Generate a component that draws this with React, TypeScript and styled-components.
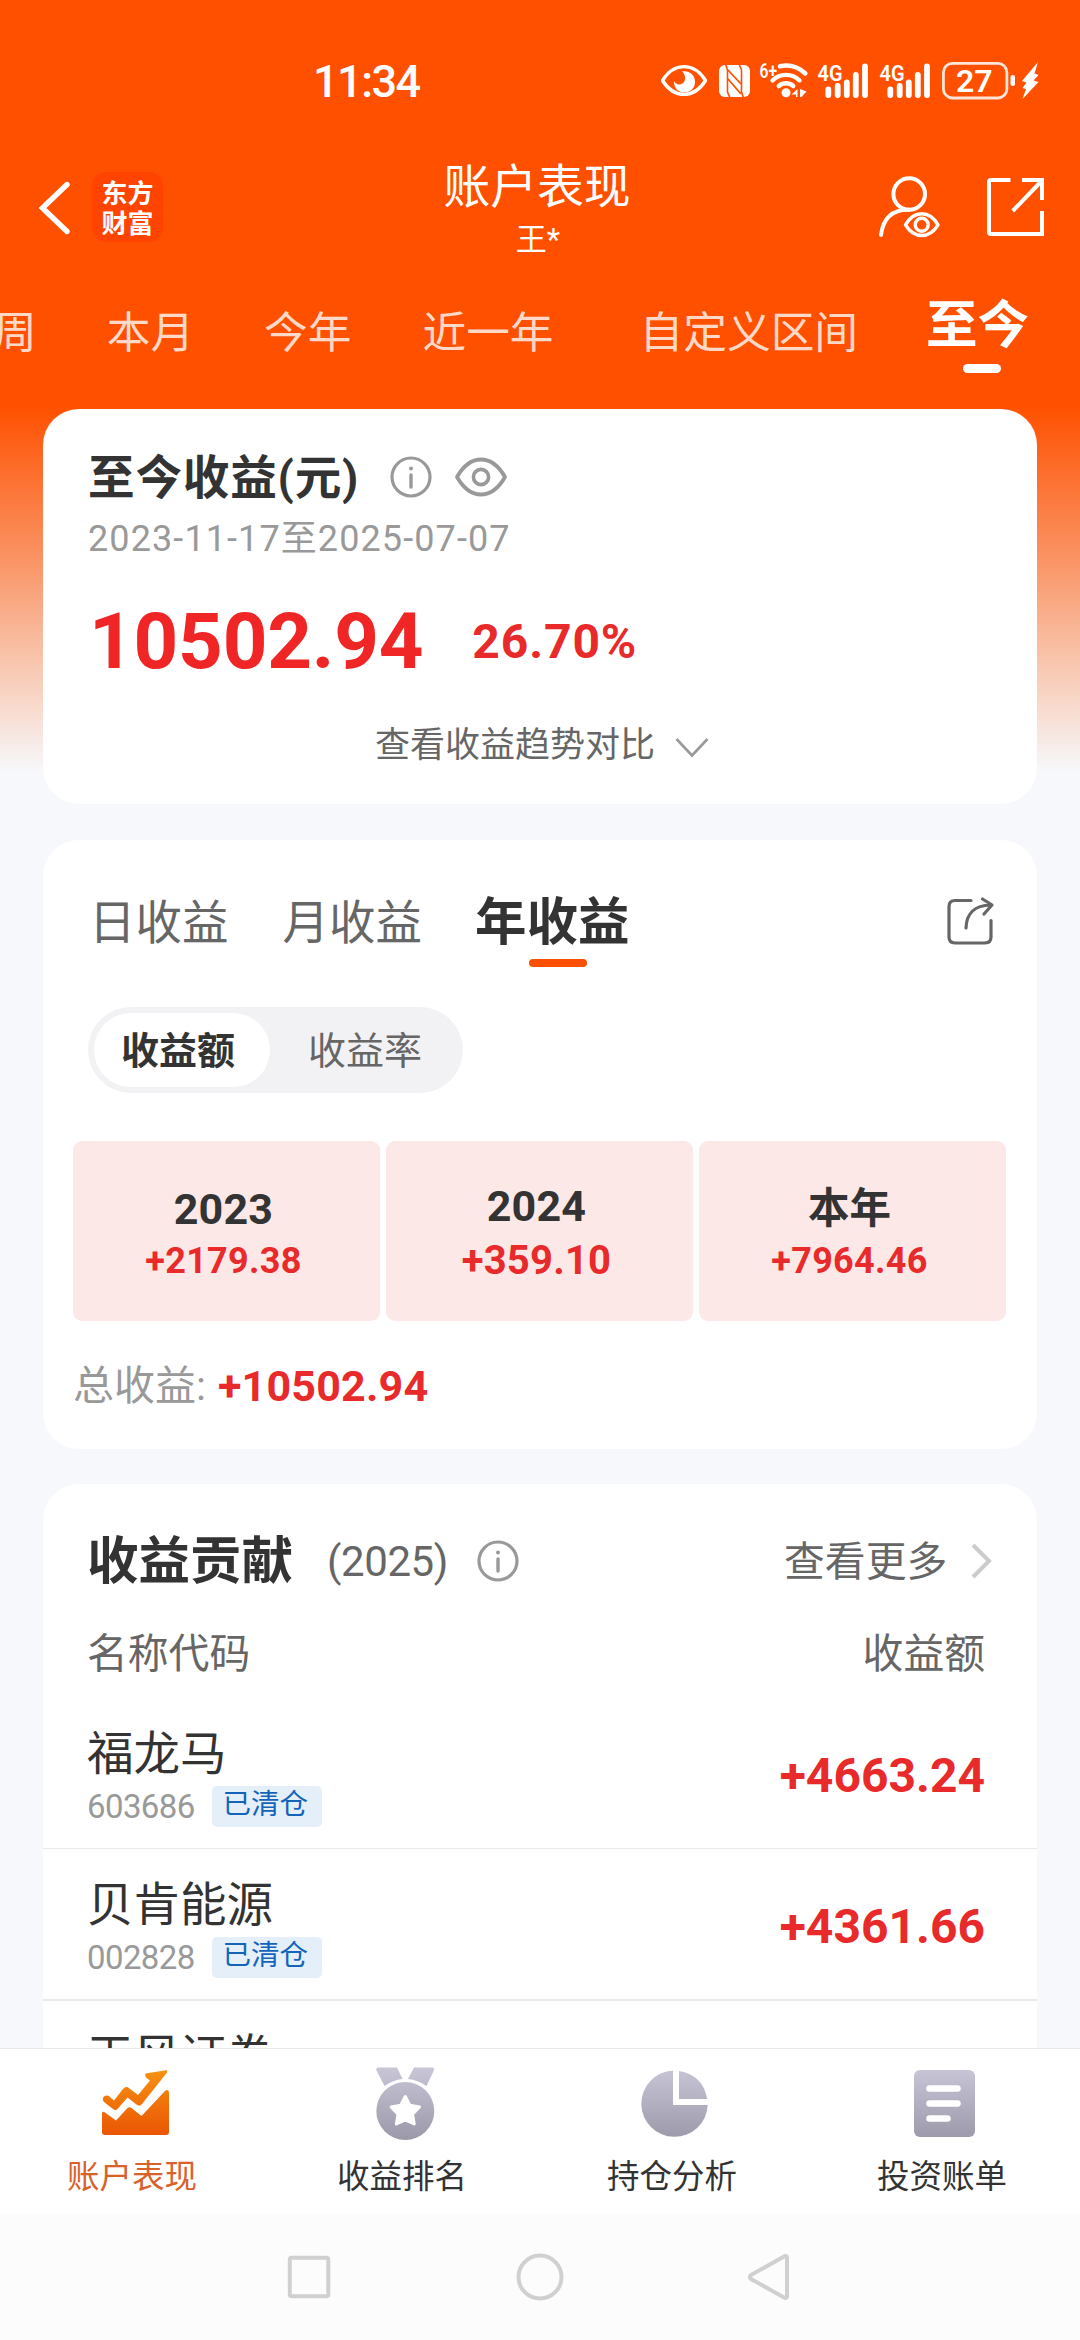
import React from 'react';
import styled, { createGlobalStyle } from 'styled-components';

const GlobalStyle = createGlobalStyle`
  * { box-sizing: border-box; }
  body { margin: 0; background: #f7f8fb; }
`;

const Page = styled.div`
  width: 1080px;
  height: 2340px;
  overflow: hidden;
  display: flex;
  flex-direction: column;
  font-family: Roboto, 'Noto Sans CJK SC', sans-serif;
  white-space: nowrap;
  background: linear-gradient(#ff5000 0, #ff5000 405px, #fa9465 560px, #f8c0a5 650px, #f7f8fb 772px);
`;

interface TxtProps { $s: number; $lh?: number; $w?: number; $c?: string; $ls?: number; $ml?: number; $mt?: number }
const Txt = styled.span<TxtProps>`
  display: block;
  flex: none;
  font-size: ${p => p.$s}px;
  line-height: ${p => p.$lh ?? 60}px;
  font-weight: ${p => p.$w ?? 400};
  color: ${p => p.$c ?? '#333'};
  letter-spacing: ${p => p.$ls ?? 0}px;
  margin-left: ${p => p.$ml ?? 0}px;
  margin-top: ${p => p.$mt ?? 0}px;
`;

const StatusBar = styled.div`
  height: 160px;
  padding: 61px 41px 0 315px;
  display: flex;
  align-items: flex-start;
  justify-content: space-between;
`;
const StatusIcons = styled.div`
  display: flex;
`;
const Svg = styled.svg<{ $ml?: number; $mt?: number }>`
  display: block;
  flex: none;
  overflow: visible;
  margin-left: ${p => p.$ml ?? 0}px;
  margin-top: ${p => p.$mt ?? 0}px;
`;

interface GlyphProps { x: number; y: number; w: number; h: number; ml?: number; mt?: number; children: React.ReactNode }
const Glyph = ({ x, y, w, h, ml, mt, children }: GlyphProps) => (
  <Svg width={w} height={h} viewBox={`${x} ${y} ${w} ${h}`} $ml={ml} $mt={mt} fill="none">{children}</Svg>
);

const Header = styled.header`
  height: 104px;
  display: grid;
  grid-template-columns: 1fr auto 1fr;
`;
const HeaderSide = styled.div<{ $end?: boolean }>`
  display: flex;
  align-items: flex-start;
  justify-content: ${p => (p.$end ? 'flex-end' : 'flex-start')};
  padding: 12px ${p => (p.$end ? 34 : 0)}px 0 ${p => (p.$end ? 0 : 38)}px;
`;
const HeaderTitle = styled.div`
  display: flex;
  flex-direction: column;
  align-items: center;
`;
const Logo = styled.div`
  width: 71px;
  height: 70px;
  margin-left: 20px;
  border-radius: 14px;
  background: #ff4400;
  color: #fff;
  font: 700 26px/30px 'Noto Sans CJK SC', sans-serif;
  text-align: center;
  padding-top: 5px;
`;

const PeriodTabs = styled.nav`
  height: 145px;
  flex: none;
  display: flex;
  align-items: flex-start;
  padding-top: 39px;
`;
const ActivePeriod = styled.div`
  margin-left: 68px;
  margin-top: -7px;
  display: flex;
  flex-direction: column;
  align-items: center;
`;
const Indicator = styled.i<{ $w: number; $h: number; $c: string; $mt: number; $ml: number }>`
  width: ${p => p.$w}px;
  height: ${p => p.$h}px;
  background: ${p => p.$c};
  border-radius: 5px;
  margin-top: ${p => p.$mt}px;
  margin-left: ${p => p.$ml}px;
`;

const Card = styled.section<{ $h: number; $open?: boolean }>`
  flex: none;
  height: ${p => p.$h}px;
  margin: ${p => (p.$open ? -1 : 0)}px 43px ${p => (p.$open ? 0 : 36)}px;
  border-radius: ${p => (p.$open ? '36px 36px 0 0' : '36px')};
  background: #fff;
  overflow: hidden;
  display: flex;
  flex-direction: column;
`;
const Row = styled.div<{ $pad?: string; $h?: number; $justify?: string; $align?: string }>`
  display: flex;
  flex: none;
  align-items: ${p => p.$align ?? 'center'};
  justify-content: ${p => p.$justify ?? 'flex-start'};
  padding: ${p => p.$pad ?? '0'};
  height: ${p => (p.$h ? `${p.$h}px` : 'auto')};
`;

const ActiveTab = styled.div`
  margin-left: 53px;
  display: flex;
  flex-direction: column;
  align-items: center;
`;
const ShareSlot = styled.div`
  margin-left: auto;
`;
const Segmented = styled.div`
  width: 375px;
  height: 86px;
  flex: none;
  margin: 40px 0 48px 45px;
  padding: 6px;
  border-radius: 43px;
  background: #f2f2f5;
  display: flex;
`;
const Segment = styled.div<{ $on?: boolean }>`
  width: ${p => (p.$on ? 176 : 187)}px;
  height: 74px;
  border-radius: 37px;
  background: ${p => (p.$on ? '#fff' : 'transparent')};
  display: flex;
  align-items: center;
  padding-left: ${p => (p.$on ? 27 : 38)}px;
`;
const Tiles = styled.div`
  display: grid;
  grid-template-columns: repeat(3, 1fr);
  gap: 6px;
  padding: 0 31px 0 30px;
`;
const Tile = styled.div`
  height: 180px;
  border-radius: 9px;
  background: #fce8e7;
  display: flex;
  flex-direction: column;
  align-items: center;
  padding-right: 6px;
`;

const Holding = styled.div<{ $line: number }>`
  flex: none;
  height: ${p => 150 + p.$line}px;
  padding: 24px 52px 0 44px;
  display: flex;
  justify-content: space-between;
  border-bottom: ${p => p.$line}px solid #ebebec;
`;
const CodeLine = styled.div`
  display: flex;
  align-items: center;
  height: 41px;
`;
const Tag = styled.span`
  height: 41px;
  width: 110px;
  margin-left: 17px;
  padding-right: 3px;
  border-radius: 5px;
  background: #e4eff9;
  color: #1464b9;
  font-size: 28.5px;
  line-height: 37px;
  text-align: center;
`;

const BottomTabs = styled.nav`
  flex: none;
  height: 166px;
  border-top: 1px solid #e9e9ea;
  background: #fff;
  display: grid;
  grid-template-columns: repeat(4, 1fr);
`;
const BottomTab = styled.div`
  display: flex;
  flex-direction: column;
  align-items: center;
  padding-top: 13px;
`;
const SystemNav = styled.div`
  flex: none;
  height: 126px;
  background: #fcfcfc;
  display: flex;
  justify-content: center;
  padding-top: 37px;
`;

const RED = '#e82a2a';

const InfoIcon = ({ ml, mt }: { ml: number; mt?: number }) => (
  <Glyph x={0} y={0} w={42} h={42} ml={ml} mt={mt}>
    <circle cx="21" cy="21" r="19" stroke="#999" strokeWidth="3.2" />
    <circle cx="21" cy="12.6" r="2" fill="#999" />
    <path d="M21 19V31" stroke="#999" strokeWidth="3.4" strokeLinecap="round" />
  </Glyph>
);

const Signal = ({ ml }: { ml: number }) => (
  <Glyph x={818} y={61} w={50} h={40} ml={ml}>
    <text x="817.5" y="81" fontSize="22.5" fontWeight="600" fill="#fff" textLength="25" lengthAdjust="spacingAndGlyphs">4G</text>
    <path d="M828.3 89.5V95M837.7 86V95M846.8 82.5V95M855.8 75V95M865 66.5V95" stroke="#fff" strokeWidth="5.8" strokeLinecap="round" />
  </Glyph>
);

const Chevron = () => (
  <Glyph x={0} y={0} w={34} h={22} ml={20} mt={4}>
    <path d="M1.5 2L17 18.500L32.500 2" stroke="#999" strokeWidth="2.6" />
  </Glyph>
);

const years = [
  { label: '2023', value: '+2179.38', ls: 43, vs: 36, y: 38, gap: 51, sp: 0.2, vsp: 0.3 },
  { label: '2024', value: '+359.10', ls: 43, vs: 40, y: 35, gap: 55, sp: 0.2, vsp: 0.2 },
  { label: '本年', value: '+7964.46', ls: 41.5, vs: 36, y: 38, gap: 51, sp: 0, vsp: 0.3 },
];

const holdings = [
  { name: '福龙马', code: '603686', gain: '+4663.24', line: 1 },
  { name: '贝肯能源', code: '002828', gain: '+4361.66', line: 2 },
  { name: '天风证券', code: '', gain: '', line: 0 },
];

export default function App() {
  return (
    <Page>
      <GlobalStyle />
      <svg width="0" height="0" style={{ position: 'absolute' }}>
        <defs>
          <linearGradient id="hot" x1="0" y1="2070" x2="0" y2="2135" gradientUnits="userSpaceOnUse">
            <stop stopColor="#f79210" /><stop offset="1" stopColor="#ea5504" />
          </linearGradient>
          <linearGradient id="cool" x1="0" y1="2067" x2="0" y2="2140" gradientUnits="userSpaceOnUse">
            <stop stopColor="#c9c7d7" /><stop offset="1" stopColor="#9b99a9" />
          </linearGradient>
        </defs>
      </svg>

      <StatusBar>
        <Txt $s={45} $lh={40} $w={500} $c="#fff" $ls={-1.5} $ml={-2} $mt={1}>11:34</Txt>
        <StatusIcons>
          <Glyph x={661} y={61} w={46} h={40}>
            <path d="M662.500 80.500C674 62 694 62 705.500 80.500C694 99 674 99 662.500 80.500Z" stroke="#fff" strokeWidth="3.4" strokeLinejoin="round" />
            <path d="M682 71.500C690 70 695.500 76 695 82.500C694.500 89.500 689 92.500 684 92.500C678 92.500 673.500 87.500 674 81C676 85.500 682.500 85.500 684.500 81C686 77.500 684.500 73.500 682 71.500Z" fill="#fff" />
          </Glyph>
          <Glyph x={719} y={61} w={31} h={40} ml={12}>
            <rect x="719" y="65" width="31" height="32" rx="6" fill="#fff" />
            <path d="M725.500 64L727.500 70V92L730 98M743.500 98L741.500 92V70L739 64" stroke="#ff5000" strokeWidth="1.6" />
            <path d="M728 70L741 84M728 79L741 94" stroke="#ff5000" strokeWidth="1.800" />
          </Glyph>
          <Glyph x={760} y={61} w={48} h={40} ml={10}>
            <text x="759.5" y="78" fontSize="20" fontWeight="600" fill="#fff" textLength="17.5" lengthAdjust="spacingAndGlyphs">6+</text>
            <path d="M780 66.200A27.500 27.500 0 0 1 805.300 73.500" stroke="#fff" strokeWidth="4.600" strokeLinecap="round" />
            <path d="M772.500 80.500A19 19 0 0 1 799.500 80.500M778.800 86A11 11 0 0 1 793.200 86" stroke="#fff" strokeWidth="4.400" strokeLinecap="round" />
            <circle cx="786" cy="92.800" r="4.500" fill="#fff" />
            <path d="M791.500 94.500L797.500 89V97H796V94.500ZM800 89L806.500 91.500L801.500 97H800Z" fill="#fff" />
          </Glyph>
          <Signal ml={10} />
          <Signal ml={12} />
          <Glyph x={942} y={61} w={74} h={40} ml={12}>
            <rect x="943.400" y="63.400" width="63.500" height="34.600" rx="9" stroke="#fff" strokeOpacity="0.85" strokeWidth="2.800" />
            <rect x="1010.500" y="75" width="4.500" height="11" rx="2" fill="#fff" />
            <text x="974.3" y="92" textAnchor="middle" fontSize="32" fontWeight="600" fill="#fff">27</text>
          </Glyph>
          <Glyph x={1021} y={61} w={18} h={40} ml={5}>
            <path d="M1038 62L1022 81L1026.500 82.500L1022.500 88L1026 89L1022.500 99L1038.500 82L1033.500 80.500L1038.500 75L1034.500 73.500Z" fill="#fff" />
          </Glyph>
        </StatusIcons>
      </StatusBar>

      <Header>
        <HeaderSide>
          <Glyph x={38} y={180} w={34} h={56} mt={8}>
            <path d="M67 184.500L42.500 208L67 231.500" stroke="#fff" strokeWidth="5.4" strokeLinecap="round" />
          </Glyph>
          <Logo>东方<br />财富</Logo>
        </HeaderSide>
        <HeaderTitle>
          <Txt $s={46.8} $lh={54} $c="#fff" $ml={-6}>账户表现</Txt>
          <Txt $s={31} $lh={51} $c="#fff" $ml={-4}>王*</Txt>
        </HeaderTitle>
        <HeaderSide $end>
          <Glyph x={878} y={172} w={64} h={68}>
            <circle cx="909.200" cy="194" r="15.800" stroke="#fff" strokeWidth="4" />
            <path d="M881 235C883 219 892 209.500 909 209.800" stroke="#fff" strokeWidth="4" strokeLinecap="round" />
            <path d="M905.500 224.800C914 210 929.500 210 938 224.800C929.500 239 914 239 905.500 224.800Z" stroke="#fff" strokeWidth="3.400" strokeLinejoin="round" />
            <circle cx="921.700" cy="224.800" r="6.500" stroke="#fff" strokeWidth="3.400" />
          </Glyph>
          <Glyph x={986} y={172} w={60} h={68} ml={44}>
            <path d="M1010.500 180H991Q989 180 989 182V232Q989 234 991 234H1042V211M1022 180H1042V200M1012.700 211L1042 180.500" stroke="#fff" strokeWidth="4" />
          </Glyph>
        </HeaderSide>
      </Header>

      <PeriodTabs>
        <Txt $s={43.7} $c="#ffd9c7" $ml={-7}>周</Txt>
        <Txt $s={43.7} $c="#ffd9c7" $ml={70}>本月</Txt>
        <Txt $s={43.7} $c="#ffd9c7" $ml={70}>今年</Txt>
        <Txt $s={43.7} $c="#ffd9c7" $ml={71}>近一年</Txt>
        <Txt $s={43.7} $c="#ffd9c7" $ml={86}>自定义区间</Txt>
        <ActivePeriod>
          <Txt $s={51.5} $w={700} $c="#fff">至今</Txt>
          <Indicator $w={38} $h={9} $c="#fff" $mt={8} $ml={9} />
        </ActivePeriod>
      </PeriodTabs>

      <Card $h={395}>
        <Row $pad="39px 0 0 45px">
          <Txt $s={46.6} $w={700} $ls={0.8}>至今收益(元)</Txt>
          <InfoIcon ml={31} mt={-3} />
          <Glyph x={455} y={455} w={52} h={42} ml={23} mt={-3}>
            <path d="M457 476Q467 458.500 481 458.500T505 476Q495 493.500 481 493.500T457 476Z" stroke="#999" strokeWidth="3.800" strokeLinejoin="round" />
            <circle cx="481" cy="476" r="7.600" stroke="#999" strokeWidth="3.600" />
          </Glyph>
        </Row>
        <Row $pad="1px 0 0 45px">
          <Txt $s={36} $c="#999" $ls={1.1}>2023-11-17至2025-07-07</Txt>
        </Row>
        <Row $pad="14px 0 0 46px" $h={132}>
          <Txt $s={78} $w={700} $c="#f02525" $lh={100} $ls={-0.2}>10502.94</Txt>
          <Txt $s={48} $w={700} $c={RED} $lh={100} $ml={49} $ls={0.9}>26.70%</Txt>
        </Row>
        <Row $pad="15px 0 0 4px" $justify="center">
          <Txt $s={35} $c="#666">查看收益趋势对比</Txt>
          <Chevron />
        </Row>
      </Card>

      <Card $h={609}>
        <Row $pad="53px 42px 0 46px" $align="flex-start" $h={127}>
          <Txt $s={46.5} $c="#666">日收益</Txt>
          <Txt $s={46.5} $c="#666" $ml={54}>月收益</Txt>
          <ActiveTab>
            <Txt $s={51.5} $w={700}>年收益</Txt>
            <Indicator $w={58} $h={8} $c="#fa5000" $mt={6} $ml={12} />
          </ActiveTab>
          <ShareSlot>
            <Glyph x={944} y={896} w={50} h={52} mt={3}>
              <path d="M970 900.500H954Q948 900.500 948 906.500V937Q948 943 954 943H984Q990 943 990 937V920.500" stroke="#666" strokeWidth="3.2" strokeLinecap="round" />
              <path d="M965 928C965.500 913 973 905.500 990 905M981.500 899L991 905L983 914" stroke="#666" strokeWidth="3.2" strokeLinecap="round" strokeLinejoin="round" />
            </Glyph>
          </ShareSlot>
        </Row>
        <Segmented>
          <Segment $on><Txt $s={38} $w={700} $mt={1}>收益额</Txt></Segment>
          <Segment><Txt $s={38} $c="#666" $mt={1}>收益率</Txt></Segment>
        </Segmented>
        <Tiles>
          {years.map(t => (
            <Tile key={t.label}>
              <Txt $s={t.ls} $w={700} $ls={t.sp} $mt={t.y}>{t.label}</Txt>
              <Txt $s={t.vs} $w={700} $c={RED} $lh={t.gap} $ls={t.vsp} $mt={-3}>{t.value}</Txt>
            </Tile>
          ))}
        </Tiles>
        <Row $pad="35px 0 0 30px">
          <Txt $s={41} $c="#999">总收益:</Txt>
          <Txt $s={43} $w={700} $c={RED} $ml={12} $ls={0.2}>+10502.94</Txt>
        </Row>
      </Card>

      <Card $h={564} $open>
        <Row $pad="48px 42px 0 44px">
          <Txt $s={51.5} $w={700}>收益贡献</Txt>
          <Txt $s={42} $c="#666" $ml={34} $ls={-0.4}>(2025)</Txt>
          <InfoIcon ml={29} mt={-2} />
          <Txt $s={40.8} $c="#666" $ml={265}>查看更多</Txt>
          <Glyph x={973} y={1542} w={24} h={36} ml={23} mt={-2}>
            <path d="M976 1544L992 1560L976 1576" stroke="#ccc" strokeWidth="4" />
          </Glyph>
        </Row>
        <Row $pad="32px 52px 0 44px" $justify="space-between">
          <Txt $s={40.8} $c="#666">名称代码</Txt>
          <Txt $s={40.8} $c="#666">收益额</Txt>
        </Row>
        <Row $h={14} />
        {holdings.map(h => (
          <Holding key={h.name} $line={h.line}>
            <div>
              <Txt $s={46.5} $lh={64}>{h.name}</Txt>
              {h.code && (
                <CodeLine>
                  <Txt $s={33} $lh={41} $c="#999" $ls={-0.6}>{h.code}</Txt>
                  <Tag>已清仓</Tag>
                </CodeLine>
              )}
            </div>
            <Txt $s={48} $w={700} $c={RED} $mt={24}>{h.gain}</Txt>
          </Holding>
        ))}
      </Card>

      <BottomTabs>
        <BottomTab>
          <Glyph x={98} y={2062} w={74} h={82}>
            <path d="M145 2075Q145 2073.500 147 2073.300L166 2070.300Q168 2070.500 167 2072.500L142 2104Q139.500 2107 136.500 2104.500L127.500 2097.500L117.500 2109Q115.500 2111 113 2109L104 2102Q101.500 2099 104 2096.500Q107 2094.500 110 2097L114 2100.500L123 2089Q126 2085.500 129.500 2088.500L138 2095L150 2080.500L146 2077.500Z" fill="url(#hot)" />
            <path d="M102 2113Q103 2111 105 2112.500L116 2120.500L127.500 2108Q129.500 2106.500 131.500 2108L141.500 2116L164.500 2091.500Q169 2088 169 2093V2132Q169 2135 166 2135H105Q102 2135 102 2132Z" fill="url(#hot)" />
          </Glyph>
          <Txt $s={32.5} $lh={66} $c="#d9622b" $ml={-6}>账户表现</Txt>
        </BottomTab>
        <BottomTab>
          <Glyph x={369} y={2062} w={74} h={82}>
            <path d="M378.500 2067.500H398L403.500 2079Q394 2080 385.500 2086L377 2069.500ZM415 2067.500H433.500L435.500 2069L427.500 2086Q419 2080 409 2079Z" fill="url(#cool)" />
            <circle cx="406.300" cy="2111" r="29" fill="url(#cool)" />
            <path d="M406.300 2096.500L410.900 2105.300L420.500 2107L413.600 2114.300L415.200 2124L406.300 2119.800L397.400 2124L399 2114.300L392.100 2107L401.700 2105.300Z" fill="#fff" stroke="#fff" strokeWidth="3" strokeLinejoin="round" />
          </Glyph>
          <Txt $s={32.5} $lh={66} $ml={-6}>收益排名</Txt>
        </BottomTab>
        <BottomTab>
          <Glyph x={639} y={2062} w={74} h={82}>
            <path d="M674 2070.500A33.200 33.200 0 1 0 708.700 2105H674Z" fill="url(#cool)" />
            <path d="M680 2071Q704 2075 708.200 2099H680Z" fill="url(#cool)" />
          </Glyph>
          <Txt $s={32.5} $lh={66} $ml={-6}>持仓分析</Txt>
        </BottomTab>
        <BottomTab>
          <Glyph x={909} y={2062} w={74} h={82}>
            <rect x="915" y="2070" width="61" height="67" rx="6" fill="url(#cool)" />
            <path d="M930.500 2088.500H958.500M930.500 2103.500H958.500M930.500 2118.500H948.500" stroke="#fff" strokeWidth="6.500" strokeLinecap="round" />
          </Glyph>
          <Txt $s={32.5} $lh={66} $ml={-6}>投资账单</Txt>
        </BottomTab>
      </BottomTabs>

      <SystemNav>
        <Glyph x={285} y={2251} w={48} h={52} ml={-2}>
          <rect x="289.800" y="2257.800" width="38.500" height="38.500" rx="2" stroke="#d0d0d0" strokeWidth="4" />
        </Glyph>
        <Glyph x={515} y={2251} w={50} h={52} ml={182}>
          <circle cx="540" cy="2277" r="21.500" stroke="#d0d0d0" strokeWidth="4" />
        </Glyph>
        <Glyph x={745} y={2251} w={48} h={52} ml={180}>
          <path d="M785 2256L751 2275Q749 2277 751 2279L785 2298Q787 2298 787 2296V2258Q787 2256 785 2256Z" stroke="#d0d0d0" strokeWidth="4" strokeLinejoin="round" />
        </Glyph>
      </SystemNav>
    </Page>
  );
}
